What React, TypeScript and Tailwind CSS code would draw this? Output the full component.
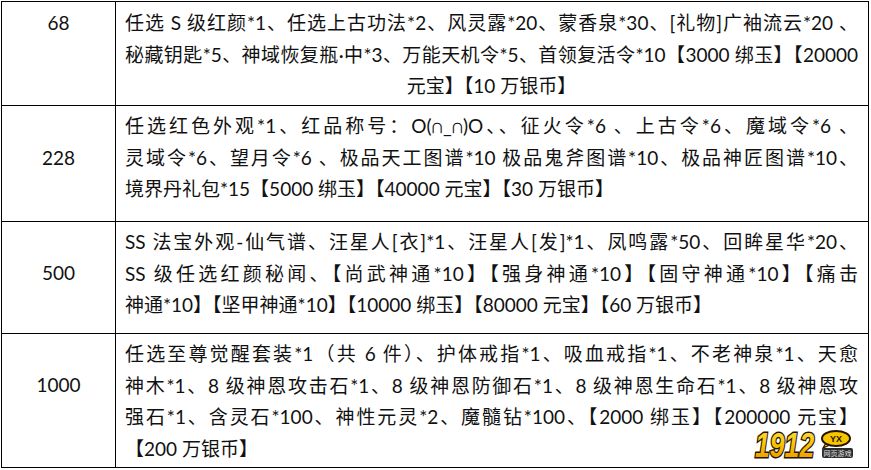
import React from "react";

type Row = {
  num: string;
  h: string;
  numPt: string;
  pt: string;
  lines: string[];
  lastAlign: string;
};

const rows: Row[] = [
  {
    num: "68",
    h: "h-[104px]",
    numPt: "pt-[5px]",
    pt: "pt-[5px]",
    lines: [
      "任选 S 级红颜*1、任选上古功法*2、风灵露*20、蒙香泉*30、[礼物]广袖流云*20 、",
      "秘藏钥匙*5、神域恢复瓶·中*3、万能天机令*5、首领复活令*10【3000 绑玉】【20000",
      "元宝】【10 万银币】",
    ],
    lastAlign: "text-center",
  },
  {
    num: "228",
    h: "h-[116px]",
    numPt: "pt-[36px]",
    pt: "pt-[4px]",
    lines: [
      "任选红色外观*1、红品称号：O(∩_∩)O、、征火令*6 、上古令*6、魔域令*6 、",
      "灵域令*6、望月令*6 、极品天工图谱*10  极品鬼斧图谱*10、极品神匠图谱*10、",
      "境界丹礼包*15【5000 绑玉】【40000 元宝】【30 万银币】",
    ],
    lastAlign: "text-left",
  },
  {
    num: "500",
    h: "h-[112px]",
    numPt: "pt-[35px]",
    pt: "pt-[4px]",
    lines: [
      "SS 法宝外观-仙气谱、汪星人[衣]*1、汪星人[发]*1、凤鸣露*50、回眸星华*20、",
      "SS 级任选红颜秘闻、【尚武神通*10】【强身神通*10】【固守神通*10】【痛击",
      "神通*10】【坚甲神通*10】【10000 绑玉】【80000 元宝】【60 万银币】",
    ],
    lastAlign: "text-left",
  },
  {
    num: "1000",
    h: "h-[134px]",
    numPt: "pt-[35px]",
    pt: "pt-[4px]",
    lines: [
      "任选至尊觉醒套装*1（共 6 件）、护体戒指*1、吸血戒指*1、不老神泉*1、天愈",
      "神木*1、8 级神恩攻击石*1、8 级神恩防御石*1、8 级神恩生命石*1、8 级神恩攻",
      "强石*1、含灵石*100、神性元灵*2、魔髓钻*100、【2000 绑玉】【200000 元宝】",
      "【200 万银币】",
    ],
    lastAlign: "text-left",
  },
];

function Logo() {
  return (
    <svg
      width="104"
      height="36"
      viewBox="0 0 104 36"
      overflow="visible"
      className="absolute left-[751px] top-[426px]"
    >
      <defs>
        <linearGradient id="lg1912" x1="0" y1="0" x2="0" y2="1">
          <stop offset="0" stopColor="#ffe45a" />
          <stop offset="0.5" stopColor="#f8c400" />
          <stop offset="1" stopColor="#e98a00" />
        </linearGradient>
      </defs>
      <text
        transform="translate(4 31) scale(0.74 1)"
        x="0"
        y="0"
        fontFamily="'Liberation Sans', Arial, sans-serif"
        fontWeight="900"
        fontStyle="italic"
        fontSize="36"
        fill="url(#lg1912)"
        stroke="#231400"
        strokeWidth="2.8"
        paintOrder="stroke"
      >
        1912
      </text>
      <path d="M75 17 L72 22 L79 19 Z" fill="#f8c400" stroke="#231400" strokeWidth="1.2" />
      <ellipse cx="85" cy="12.5" rx="14" ry="7.5" fill="#f8c400" stroke="#231400" strokeWidth="2" />
      <text
        x="85"
        y="15.5"
        textAnchor="middle"
        fontSize="9"
        fontWeight="bold"
        fill="#231400"
        fontFamily="'Liberation Sans', Arial, sans-serif"
      >
        YX
      </text>
      <rect x="71" y="22" width="31" height="10" rx="2" fill="#2b2b2b" />
      <text
        x="86.5"
        y="29.5"
        textAnchor="middle"
        fontSize="7"
        fill="#e6e6e6"
        fontFamily="'Noto Sans CJK SC', sans-serif"
      >
        网页游戏
      </text>
    </svg>
  );
}

export default function App() {
  return (
    <div className="relative w-[871px] h-[470px] bg-white text-[#111] font-['Lato','Noto_Sans_CJK_SC',sans-serif] text-[19px] leading-[31.5px]">
      <div className="ml-[1px] pt-[1px]">
        <div className="w-[868px] border-l border-t border-black">
          {rows.map((r) => (
            <div key={r.num} className={`flex ${r.h}`}>
              <div
                className={`w-[114px] shrink-0 border-r border-b border-black text-center ${r.numPt}`}
              >
                {r.num}
              </div>
              <div
                className={`flex-1 min-w-0 border-r border-b border-black pl-[9px] pr-[10px] ${r.pt}`}
              >
                {r.lines.map((l, i) => (
                  <div
                    key={i}
                    className={
                      i === r.lines.length - 1
                        ? r.lastAlign
                        : "text-justify [text-align-last:justify]"
                    }
                  >
                    {l}
                  </div>
                ))}
              </div>
            </div>
          ))}
        </div>
      </div>
      <Logo />
    </div>
  );
}
